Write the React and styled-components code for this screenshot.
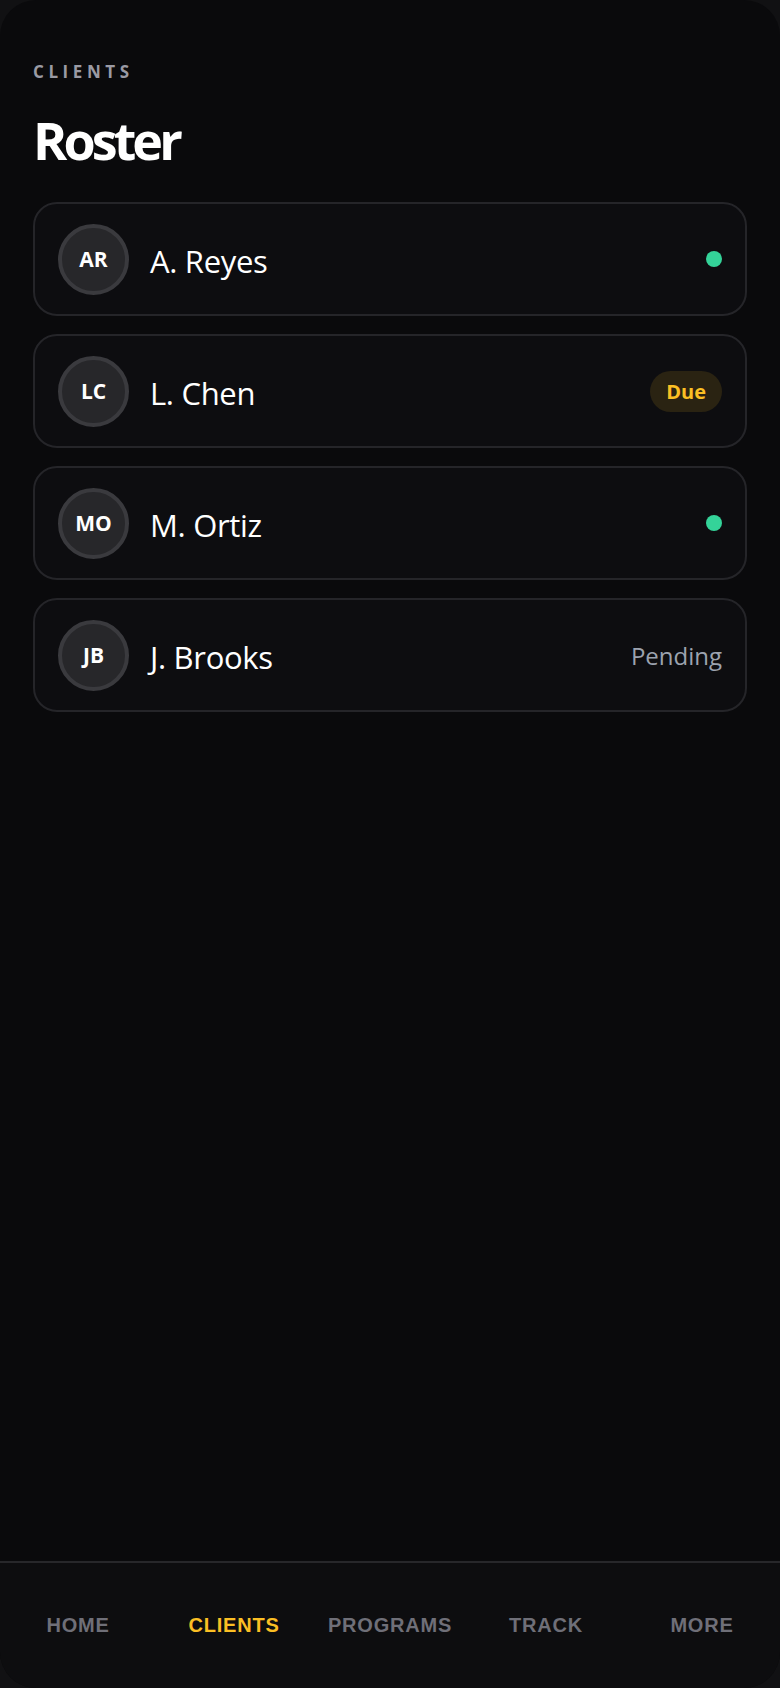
import React from "react";
import styled, { createGlobalStyle } from "styled-components";

const Global = createGlobalStyle`
  * { box-sizing: border-box; }
  html, body { margin: 0; padding: 0; background: #111113; }
  body { font-family: "Open Sans", "Noto Sans", sans-serif; -webkit-font-smoothing: antialiased; }
`;

const Frame = styled.div`
  width: 780px;
  height: 1688px;
  display: flex;
  flex-direction: column;
  background: #0a0a0c;
  border-radius: 36px;
  overflow: hidden;
`;

const Content = styled.main`
  flex: 1;
  display: flex;
  flex-direction: column;
  padding: 63px 33px 0;
`;

const Eyebrow = styled.div`
  font-size: 17px;
  line-height: 1;
  font-weight: 700;
  letter-spacing: 0.27em;
  text-transform: uppercase;
  color: #9a9aa4;
`;

const Title = styled.h1`
  margin: 34px 0 0;
  font-size: 52px;
  line-height: 1;
  font-weight: 700;
  letter-spacing: -0.075em;
  color: #ffffff;
`;

const List = styled.ul`
  list-style: none;
  margin: 36px 0 0;
  padding: 0;
  display: flex;
  flex-direction: column;
  gap: 18px;
`;

const Card = styled.li`
  display: flex;
  align-items: center;
  gap: 21px;
  height: 114px;
  padding: 0 23px;
  background: #0d0d10;
  border: 2px solid #252529;
  border-radius: 24px;
`;

const Avatar = styled.div`
  flex: none;
  width: 71px;
  height: 71px;
  border-radius: 50%;
  background: #27272a;
  border: 4px solid #3a3a3e;
  display: flex;
  align-items: center;
  justify-content: center;
  font-size: 21px;
  font-weight: 700;
  color: #ffffff;
`;

const Name = styled.span`
  flex: 1;
  padding-top: 3px;
  font-size: 31px;
  font-weight: 400;
  color: #ffffff;
  letter-spacing: -0.01em;
`;

const Dot = styled.span`
  width: 16px;
  height: 16px;
  border-radius: 50%;
  background: #34d399;
`;

const Pill = styled.span`
  display: inline-flex;
  align-items: center;
  height: 41px;
  padding: 0 16px;
  border-radius: 999px;
  background: #2a2312;
  color: #fbbf24;
  font-size: 20px;
  font-weight: 700;
`;

const Muted = styled.span`
  font-size: 24px;
  color: #9ca3af;
`;

const Nav = styled.nav`
  flex: none;
  height: 127px;
  display: grid;
  grid-template-columns: repeat(5, 1fr);
  align-items: center;
  background: #0d0d0f;
  border-top: 2px solid #27272a;
`;

const NavItem = styled.button`
  background: none;
  border: 0;
  padding: 0;
  font-family: "Liberation Sans", Arial, sans-serif;
  font-size: 20px;
  font-weight: 700;
  letter-spacing: 0.04em;
  text-transform: uppercase;
  text-align: center;
  color: ${(p) => (p.$active ? "#fbbf24" : "#6f6f78")};
`;

const clients = [
  { initials: "AR", name: "A. Reyes", status: "active" },
  { initials: "LC", name: "L. Chen", status: "due" },
  { initials: "MO", name: "M. Ortiz", status: "active" },
  { initials: "JB", name: "J. Brooks", status: "pending" },
];

const Status = ({ status }) => {
  if (status === "active") return <Dot />;
  if (status === "due") return <Pill>Due</Pill>;
  return <Muted>Pending</Muted>;
};

const tabs = ["Home", "Clients", "Programs", "Track", "More"];

export default function App() {
  return (
    <>
      <Global />
      <Frame>
        <Content>
          <Eyebrow>Clients</Eyebrow>
          <Title>Roster</Title>
          <List>
            {clients.map((c) => (
              <Card key={c.initials}>
                <Avatar>{c.initials}</Avatar>
                <Name>{c.name}</Name>
                <Status status={c.status} />
              </Card>
            ))}
          </List>
        </Content>
        <Nav>
          {tabs.map((t) => (
            <NavItem key={t} $active={t === "Clients"}>
              {t}
            </NavItem>
          ))}
        </Nav>
      </Frame>
    </>
  );
}
